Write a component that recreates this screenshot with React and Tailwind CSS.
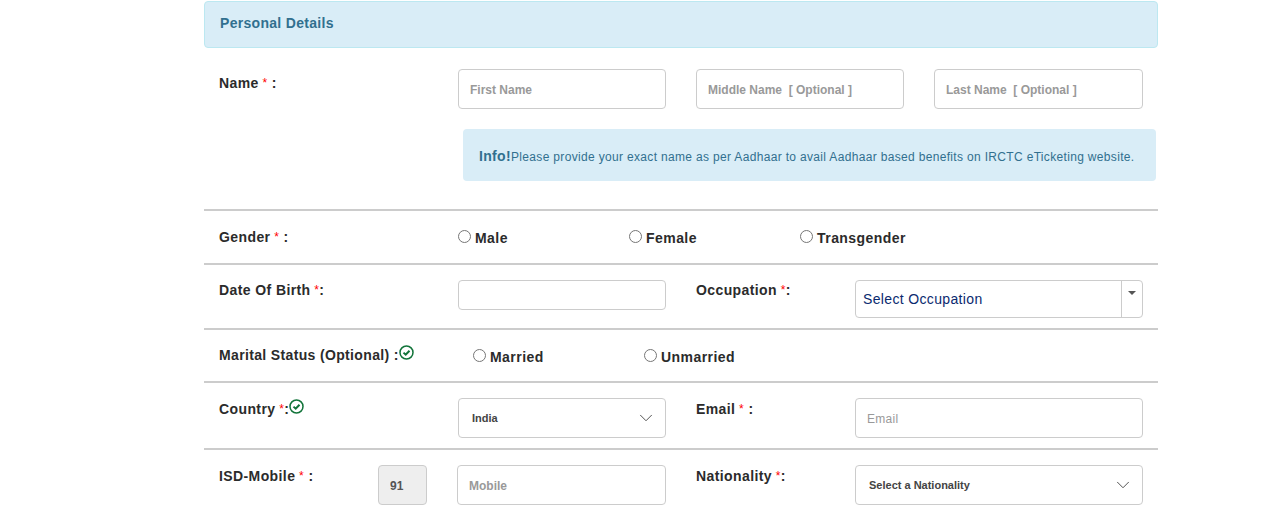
import { ChevronDown } from "lucide-react";

const inputCls =
  "h-10 border border-[#ccc] rounded-[4px] px-[11px] pt-[2px] text-[12px] text-[#555] placeholder:text-[#999] outline-none";

function Req({ text = " :" }) {
  return (
    <>
      <span className="text-[#f00] font-normal text-[12px]"> *</span>
      {text}
    </>
  );
}

function Check() {
  return (
    <svg width="15" height="15" viewBox="0 0 15 15" className="inline-block shrink-0 text-[#12743a]">
      <circle cx="7.5" cy="7.5" r="6.5" fill="none" stroke="currentColor" strokeWidth="1.5" />
      <path d="M4.5 7.6l2.2 2.1 3.8-4" fill="none" stroke="currentColor" strokeWidth="2" />
    </svg>
  );
}

function Radio({ label, className }) {
  return (
    <label className={`flex items-start text-[14px] font-bold text-[#2b2b2b] tracking-[0.45px] ${className}`}>
      <input type="radio" name={label} className="w-[13px] h-[13px] m-0 mt-[2px] mr-1 shrink-0" />
      <span className="leading-4 mt-[2px]">{label}</span>
    </label>
  );
}

function Label({ children, className = "", tracking = "tracking-[0.4px]" }) {
  return (
    <div className={`flex items-start text-[14px] leading-5 font-bold text-[#2b2b2b] whitespace-pre ${tracking} ${className}`}>
      {children}
    </div>
  );
}

function Select({ value, className = "" }) {
  return (
    <div className={`relative h-10 ${className}`}>
      <select className="w-full h-full appearance-none border border-[#ccc] rounded-[4px] bg-white pl-[13px] text-[11px] font-bold text-[#444] outline-none">
        <option>{value}</option>
      </select>
      <ChevronDown size={22} strokeWidth={1} className="absolute right-[9px] top-[9px] text-[#444] pointer-events-none" />
    </div>
  );
}

export default function App() {
  return (
    <div className="h-[514px] overflow-hidden bg-white font-['Liberation_Sans',Arial,sans-serif]">
      <div className="ml-[204px] w-[954px] pt-px">
        <div className="h-[47px] flex items-center pl-[15px] bg-[#d9edf7] border border-[#bce8f1] rounded-[4px] text-[14px] font-bold text-[#31708f] tracking-[0.3px] pb-[3px]">
          Personal Details
        </div>

        <div className="h-[161px] pt-[21px]">
          <div className="flex pl-[15px]">
            <Label className="w-[239px] mt-1">
              Name<Req />
            </Label>
            <input placeholder="First Name" className={`${inputCls} font-bold w-[208px]`} />
            <input placeholder="Middle Name  [ Optional ]" className={`${inputCls} font-bold w-[208px] ml-[30px]`} />
            <input placeholder="Last Name  [ Optional ]" className={`${inputCls} font-bold w-[209px] ml-[30px]`} />
          </div>
          <div className="ml-[259px] w-[693px] h-[52px] mt-5 flex items-center pl-4 pt-[3px] bg-[#d9edf7] rounded-[4px] text-[12px] text-[#31708f] tracking-[0.33px]">
            <b className="text-[14px]">Info!</b>Please provide your exact name as per Aadhaar to avail Aadhaar based benefits on IRCTC eTicketing website.
          </div>
        </div>

        <div className="h-[54px] border-t-2 border-[#ccc] flex pl-[15px] pt-[16px]">
          <Label className="w-[239px]">
            Gender<Req />
          </Label>
          <Radio label="Male" className="w-[171px] h-5 mt-px" />
          <Radio label="Female" className="w-[171px] h-5 mt-px" />
          <Radio label="Transgender" className="mt-px" />
        </div>

        <div className="h-[65px] border-t-2 border-[#ccc] flex pl-[15px] pt-[15px]">
          <Label className="w-[239px]">
            Date Of Birth<Req text=":" />
          </Label>
          <input className={`${inputCls} w-[208px] h-[30px]`} />
          <Label className="w-[159px] ml-[30px]">
            Occupation<Req text=":" />
          </Label>
          <div className="w-[288px] h-[38px] flex border border-[#ccc] rounded-[4px] text-[14px] text-[#0b2a6f] tracking-[0.35px]">
            <span className="flex-1 pl-[7px] leading-[36px]">Select Occupation</span>
            <span className="w-[21px] border-l border-[#ccc] flex justify-center pt-[10px]">
              <span className="w-0 h-0 border-x-[4px] border-x-transparent border-t-[4px] border-t-[#555]" />
            </span>
          </div>
        </div>

        <div className="h-[53px] border-t-2 border-[#ccc] flex pl-[15px] pt-[15px]">
          <Label className="w-[254px]" tracking="tracking-[0.35px]">
            Marital Status (Optional) :<Check />
          </Label>
          <Radio label="Married" className="w-[171px] h-5 mt-[2px]" />
          <Radio label="Unmarried" className="mt-[2px] h-5" />
        </div>

        <div className="h-[67px] border-t-2 border-[#ccc] flex pl-[15px] pt-[15px]">
          <Label className="w-[239px] mt-px">
            Country<Req text=":" /><Check />
          </Label>
          <Select value="India" className="w-[208px]" />
          <Label className="w-[159px] ml-[30px] mt-px">
            Email<Req />
          </Label>
          <input placeholder="Email" className={`${inputCls} w-[288px] tracking-[0.3px]`} />
        </div>

        <div className="border-t-2 border-[#ccc] flex pl-[15px] pt-[15px]">
          <Label className="w-[159px] mt-px">
            ISD-Mobile<Req />
          </Label>
          <input readOnly value="91" className={`${inputCls} font-bold w-[49px] bg-[#eee]`} />
          <input placeholder="Mobile" className={`${inputCls} font-bold w-[209px] ml-[30px]`} />
          <Label className="w-[159px] ml-[30px] mt-px">
            Nationality<Req text=":" />
          </Label>
          <Select value="Select a Nationality" className="w-[288px]" />
        </div>
      </div>
    </div>
  );
}
